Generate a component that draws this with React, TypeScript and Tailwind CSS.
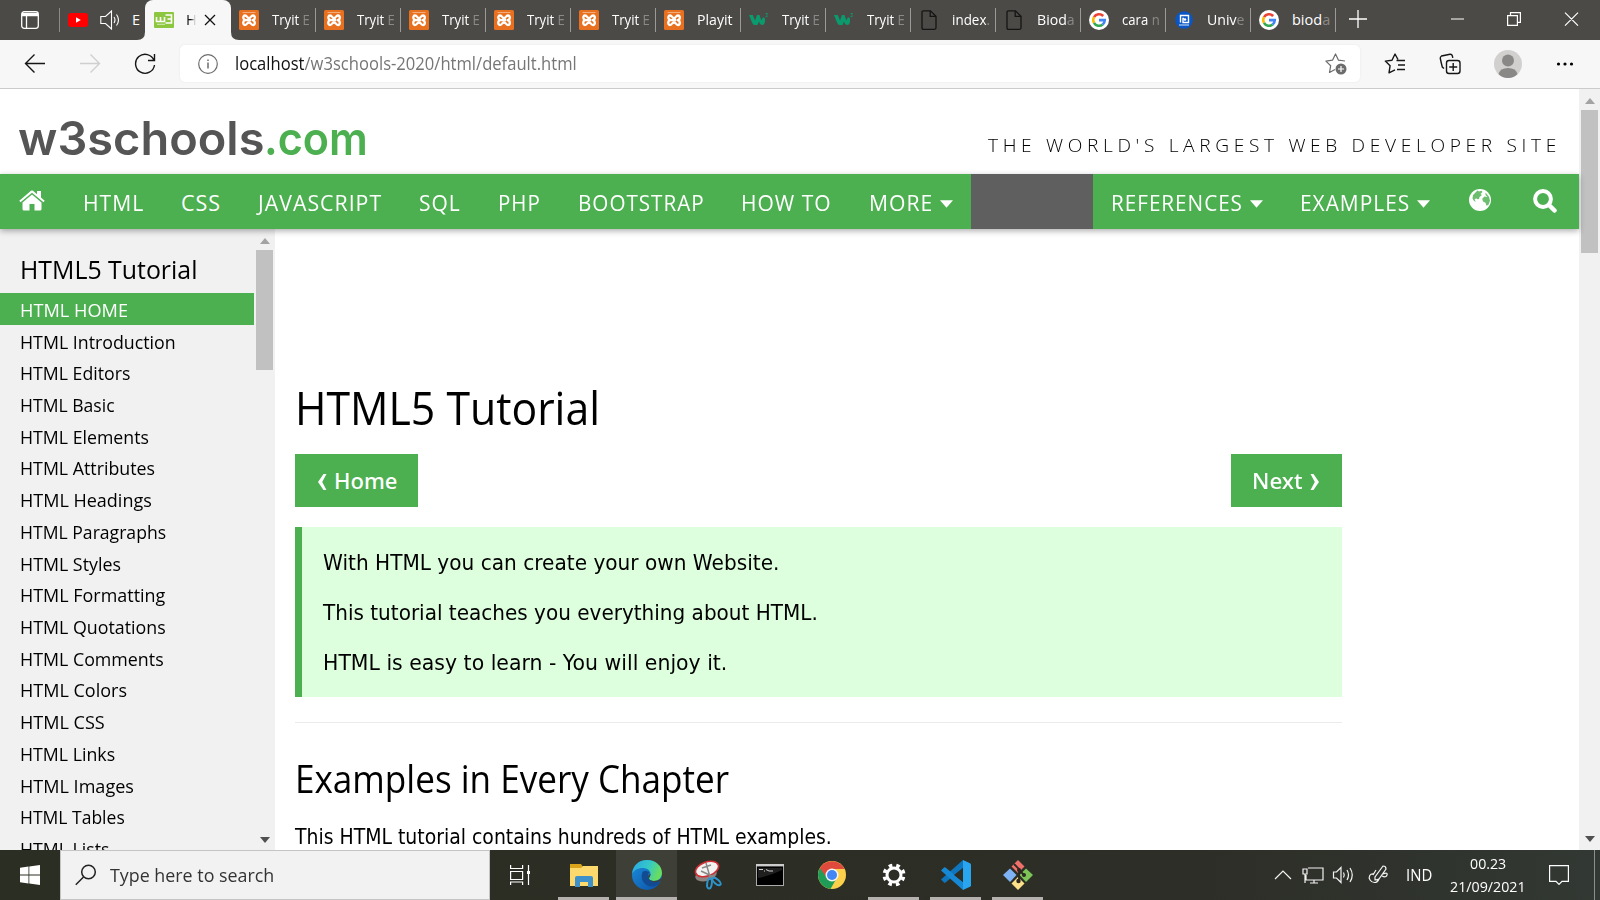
import { useLayoutEffect, useRef, type ReactNode } from "react";

/* Squeezes or stretches one line of text to the width of its box. */
function Fit({ className = "", children }: { className?: string; children: ReactNode }) {
  const box = useRef<HTMLSpanElement>(null);
  const line = useRef<HTMLSpanElement>(null);
  useLayoutEffect(() => {
    if (box.current && line.current) {
      const scale = box.current.clientWidth / line.current.offsetWidth;
      line.current.style.transform = `scaleX(${scale})`;
    }
  }, []);
  return (
    <span ref={box} className={`block shrink-0 ${className}`}>
      <span ref={line} className="inline-block origin-left whitespace-nowrap">{children}</span>
    </span>
  );
}

function Xampp() {
  return (
    <svg viewBox="0 0 20 20" className="size-5 shrink-0">
      <rect width="20" height="20" rx="1.500" fill="#e8701f" />
      <path d="M3.500 2.500h13" stroke="#f3ac7c" strokeWidth="1" />
      <path d="M8 10H12M8 10C3.500 10.500 3.500 5.500 6 5.500C8.500 5.500 7.500 8 10 8S11.500 5.500 14 5.500C16.500 5.500 16.500 10 13.500 10.200C16.500 10.500 16.500 15 14 15C11.500 15 12.500 12.500 10 12.500S8.500 15 6 15C3.500 15 3.500 10 7 10.200" fill="none" stroke="#fff" strokeWidth="2.300" strokeLinejoin="round" />
    </svg>
  );
}
function Spaces() {
  return (
    <svg viewBox="0 0 20 20" className="size-5 shrink-0">
      <path d="M0 5h3.800l2.200 5.500L8 5h2.500l1.800 5.500L14 7l2 1.500q.5 6-2.500 6.500-2.500 0-3.500-3.500L8.500 15H5.500Q4 15 3 12.500z" fill="#0b9a6d" />
      <path d="M16.500 3.500h2l-1 1.500q1.500.5.500 1.800l-1.500-.3" fill="none" stroke="#0b9a6d" strokeWidth=".8" />
    </svg>
  );
}
function Page() {
  return (
    <svg viewBox="0 0 20 20" className="size-5 shrink-0" fill="none" stroke="#151515" strokeWidth="1.300">
      <path d="M4.500.8h7L17 6.300v11.500q0 1.500-1.500 1.500h-11Q3 19.300 3 17.800V2.300Q3 .8 4.500.8zM11.200.8v5.500H17" />
    </svg>
  );
}
function Google() {
  return (
    <svg viewBox="0 0 20 20" className="size-5 shrink-0" fill="none" strokeWidth="2.600">
      <circle cx="10" cy="10" r="10" fill="#fff" />
      <path d="M14.200 6A5.800 5.800 0 0 0 5 7.200" stroke="#ea4335" />
      <path d="M5 7.200a5.800 5.800 0 0 0 0 5.600" stroke="#fbbc05" />
      <path d="M5 12.800a5.800 5.800 0 0 0 8.700 1.700" stroke="#34a853" />
      <path d="M13.700 14.500a5.800 5.800 0 0 0 2.100-4.400H10" stroke="#4285f4" />
    </svg>
  );
}
function University() {
  return (
    <svg viewBox="0 0 20 20" className="size-5 shrink-0">
      <circle cx="10" cy="10" r="8.800" fill="#0c56c4" />
      <path d="M6.500 12.500v-7h8v7h-5.500v-4h1" fill="none" stroke="#fff" strokeWidth="1.400" />
      <path d="M5 15h10" stroke="#b9d0f2" strokeWidth="1.200" />
      <circle cx="11" cy="9.500" r="1.300" fill="#fff" />
    </svg>
  );
}

const tabs: [ReactNode, string, string][] = [
  [<Xampp />, "Tryit", "E"],
  [<Xampp />, "Tryit", "E"],
  [<Xampp />, "Tryit", "E"],
  [<Xampp />, "Tryit", "E"],
  [<Xampp />, "Tryit", "E"],
  [<Xampp />, "Playit", ""],
  [<Spaces />, "Tryit", "E"],
  [<Spaces />, "Tryit", "E"],
  [<Page />, "index", "."],
  [<Page />, "Biod", "a"],
  [<Google />, "cara", "n"],
  [<University />, "Univ", "e"],
  [<Google />, "biod", "a"],
];

function TabBar() {
  return (
    <div className="flex h-10 bg-[#4b4a47] text-[14.500px] text-white">
      <div className="flex w-[59px] items-center pl-[21px]">
        <svg viewBox="0 0 18 18" className="size-[18px]" fill="none" stroke="#fff" strokeWidth="1.300">
          <rect x=".7" y=".7" width="16.600" height="16.600" rx="2.500" />
          <path d="M1 3.500h16" strokeWidth="3.500" />
          <path d="M5.500 5v12" />
        </svg>
      </div>
      <div className="my-2 w-px bg-[#8b8a88]" />
      <div className="flex w-[85px] items-center pl-2">
        <svg viewBox="0 0 20 20" className="size-5 shrink-0">
          <rect y="3" width="20" height="14" rx="3" fill="#f00" />
          <path d="M8 7.300v5.400l4.800-2.700z" fill="#fff" />
        </svg>
        <svg viewBox="0 0 20 20" className="ml-3 size-5 shrink-0" fill="none" stroke="#fff" strokeWidth="1.100">
          <path d="M.8 6.500h4.700L11.500 1v18l-6-5.500H.8zM14 7q2 3 0 6M16.500 4.500q4 5.500 0 11" />
        </svg>
        <span className="ml-[12px]">E</span>
      </div>
      <div className="relative flex w-[86px] items-center rounded-t-lg bg-[#f7f7f7] pl-[9px] text-[#111]">
        <svg viewBox="0 0 102 8" className="absolute bottom-0 -left-2 h-2 w-[102px] fill-[#f7f7f7]"><path d="M8 0v8H0q8 0 8-8zM94 0v8h8q-8 0-8-8z" /></svg>
        <svg viewBox="0 0 20 16" className="h-4 w-5 shrink-0">
          <rect width="20" height="16" rx="1" fill="#8dc63f" />
          <path d="M2.500 5v4.500h8V5M6.500 5v4.500M11.500 3h6v4h-4 4v4h-6" fill="none" stroke="#fff" strokeWidth="1.600" />
          <path d="M3 12.300h8" stroke="#d8ecc0" strokeWidth="1" />
        </svg>
        <span className="ml-[12px] w-[11px] bg-linear-to-r from-[#111] from-40% to-[#ccc] to-75% bg-clip-text text-transparent">H</span>
        <svg viewBox="0 0 12 12" className="ml-[7px] size-3" stroke="#111" strokeWidth="1.300"><path d="M1 1l10 10M11 1L1 11" /></svg>
      </div>
      {tabs.map(([icon, name, rest], i) => (
        <div key={i} className="flex w-[85px] items-center pl-2">
          {icon}
          <Fit className={`ml-[13px] ${rest === "" ? "w-[36px]" : "w-[38px]"}`}>
            {name}
            {rest && <span className="text-[#8a8987]">{rest === "E" || rest === "n" ? " " + rest : rest}</span>}
          </Fit>
          <div className="mr-0 ml-auto h-6 w-px bg-[#9b9a98]" />
        </div>
      ))}
      <svg viewBox="0 0 18 18" className="mt-[10px] ml-[13px] size-[18px]" stroke="#fff" strokeWidth="1.300"><path d="M9 0v18M0 9h18" /></svg>
      <svg viewBox="0 0 128 14" className="mt-3 ml-[84px] h-[14px] w-[128px]" fill="none" stroke="#fff" strokeWidth="1.200">
        <path d="M0 7h13M56.600 3.600h9.800v9.800h-9.800zM59.500 3.500V.6h9.900v9.800h-3M114 .6l13 13M127 .6l-13 13" />
      </svg>
    </div>
  );
}

function Toolbar() {
  return (
    <div className="flex h-[49px] items-center border-b border-[#cbcbcb] bg-[#f7f7f7]">
      <svg viewBox="0 0 132 22" className="ml-6 h-[22px] w-[132px]" fill="none" stroke="#161616" strokeWidth="1.400">
        <path d="M21 10.500H1.500M10.500 1.500l-9 9 9 9" />
        <path d="M56 10.500h19.500M66.500 1.500l9 9-9 9" stroke="#cfcfcf" />
        <path d="M130 7.500A9.500 9.500 0 1 0 130.500 12M130.500 1v6.500h-6.500" />
      </svg>
      <div className="-mt-px ml-6 flex h-[37px] w-[1180px] items-center rounded-[5px] bg-white pl-[18px] shadow-[0_0_2px_#e5e5e5]">
        <svg viewBox="0 0 20 20" className="size-5" fill="none" stroke="#6c6c6c" strokeWidth="1.200">
          <circle cx="10" cy="10" r="9.300" /><path d="M10 8.500v6M10 5.500v1.600" strokeWidth="1.500" />
        </svg>
        <Fit className="-mt-px ml-[17px] w-[342px] text-[18px] leading-[26px] text-[#767676]"><span className="text-[#111]">localhost</span>/w3schools-2020/html/default.html</Fit>
        <svg viewBox="0 0 22 22" className="mr-[13px] ml-auto size-[22px]" fill="none" stroke="#6c6c6c" strokeWidth="1.200">
          <path d="M20 8l-6.500-.8L10.500 1 7.500 7.200.9 8.100l4.800 4.600L4.500 19.500l5.500-3" strokeLinejoin="round" />
          <circle cx="16" cy="16" r="5.500" fill="#6c6c6c" stroke="none" /><path d="M16 13v6M13 16h6" stroke="#fff" />
        </svg>
      </div>
      <svg viewBox="0 0 22 22" className="ml-[24px] size-[22px]" fill="none" stroke="#161616" strokeWidth="1.400">
        <path d="M14 6.500L11 1 8 7.200 1.300 8.100l4.800 4.600L5 19.800l6-3M12.500 7.500H21M14 12h7M13 16.500h8" strokeLinejoin="round" />
      </svg>
      <svg viewBox="0 0 22 22" className="ml-[33px] size-[22px]" fill="none" stroke="#161616" strokeWidth="1.400">
        <rect x="7.500" y="7.500" width="13.500" height="13" rx="2.500" /><path d="M14.200 10v8M10.200 14h8M5 15.500L3.300 14Q2 9 1.300 5.500 1 4 2.500 3L11 1.200q1.800-.2 2.300 1.600l.5 2" />
      </svg>
      <svg viewBox="0 0 28 28" className="ml-[33px] size-7">
        <circle cx="14" cy="14" r="14" fill="#d2d0ce" /><circle cx="14" cy="10.500" r="6" fill="#8a8886" />
        <path d="M4.500 24Q6 18 14 18t9.500 6Q20 28 14 28T4.500 24z" fill="#8a8886" />
      </svg>
      <svg viewBox="0 0 18 4" className="ml-[34px] h-1 w-[18px]"><circle cx="2.500" cy="2" r="1.600" /><circle cx="9" cy="2" r="1.600" /><circle cx="15.500" cy="2" r="1.600" /></svg>
    </div>
  );
}

function Caret() {
  return <svg viewBox="0 0 14 8" className="mt-[1px] ml-[7px] h-2 w-[13px] fill-white"><path d="M0 0h14L7 8z" /></svg>;
}

function Nav() {
  return (
    <nav className="relative z-10 flex h-[55px] items-center bg-[#4caf50] pt-[3px] text-[21.500px] leading-[30px] font-normal tracking-[1px] text-white shadow-[0_2px_6px_rgba(0,0,0,0.32)]">
      <svg viewBox="0 0 26 21" className="-mt-[5px] ml-[19px] h-[21px] w-[26px] fill-white">
        <path d="M13 4.500L22.500 12.500V19q0 1.500-1.500 1.500h-5.500V14h-5v6.500H5q-1.500 0-1.500-1.500v-6.500z" />
        <path d="M12 .8q1-.8 2 0l4 3.400V1h4v6.500l3.700 3.200-1.200 1.500L13 2.800 1.500 12.200.3 10.700z" />
      </svg>
      <Fit className="ml-[38px] w-[61px]">HTML</Fit>
      <Fit className="ml-[37px] w-[40px]">CSS</Fit>
      <Fit className="ml-[37px] w-[124px]">JAVASCRIPT</Fit>
      <Fit className="ml-[37px] w-[42px]">SQL</Fit>
      <Fit className="ml-[37px] w-[43px]">PHP</Fit>
      <Fit className="ml-[37px] w-[127px]">BOOTSTRAP</Fit>
      <Fit className="ml-[36px] w-[91px]">HOW TO</Fit>
      <Fit className="ml-[37px] w-[64px]">MORE</Fit>
      <Caret />
      <div className="-mt-[3px] ml-[18px] h-[55px] w-[122px] bg-[#5f5f5f]" />
      <Fit className="ml-[18px] w-[132px]">REFERENCES</Fit>
      <Caret />
      <Fit className="ml-[37px] w-[110px]">EXAMPLES</Fit>
      <Caret />
      <svg viewBox="0 0 22 22" className="-mt-[7px] ml-[39px] size-[22px]">
        <circle cx="11" cy="11" r="11" fill="#fff" />
        <path d="M8.500 1.500l1.500 1 2.500-.8 1 1.300-2 2 1.500 1-2.500 2-.5 2-1.500.2-1.500-1-1.500 1.500 1.500 2-2-.7L3.500 9.500 4 6zM16.500 3.500l3.500 4.300 1 4-1.500 4-2 1-1-3-2.500-1.300-.8-2.700 2.300-2.200 3 .3-2-1.800z" fill="#4caf50" fillOpacity=".82" />
      </svg>
      <svg viewBox="0 0 24 24" className="-mt-[4px] ml-[42px] size-6" fill="none" stroke="#fff"><circle cx="10" cy="10" r="7.900" strokeWidth="4" /><path d="M16 16l5.500 5.500" strokeWidth="4.500" strokeLinecap="round" /></svg>
    </nav>
  );
}

const links: [string, string][] = [
  ["HTML HOME", "w-[108px]"],
  ["HTML Introduction", "w-[156px]"],
  ["HTML Editors", "w-[110px]"],
  ["HTML Basic", "w-[95px]"],
  ["HTML Elements", "w-[129px]"],
  ["HTML Attributes", "w-[135px]"],
  ["HTML Headings", "w-[132px]"],
  ["HTML Paragraphs", "w-[146px]"],
  ["HTML Styles", "w-[101px]"],
  ["HTML Formatting", "w-[145px]"],
  ["HTML Quotations", "w-[146px]"],
  ["HTML Comments", "w-[144px]"],
  ["HTML Colors", "w-[107px]"],
  ["HTML CSS", "w-[85px]"],
  ["HTML Links", "w-[95px]"],
  ["HTML Images", "w-[114px]"],
  ["HTML Tables", "w-[105px]"],
  ["HTML Lists", "w-[89px]"],
];

function Arrow({ down = false, className = "" }: { down?: boolean; className?: string }) {
  return <svg viewBox="0 0 10 6" className={`h-[6px] w-[10px] ${className}`}><path d={down ? "M0 0h10L5 6z" : "M0 6h10L5 0z"} fill={down ? "#505050" : "#a3a3a3"} /></svg>;
}

function Sidebar() {
  return (
    <aside className="flex h-[621px] w-[275px] shrink-0 bg-[#f1f1f1]">
      <div className="w-[254px] overflow-hidden text-[18.700px]">
        <Fit className="mt-[21px] ml-5 h-[43px] w-[177px] text-[26px] leading-[38px]">HTML5 Tutorial</Fit>
        {links.map(([name, width], i) => (
          <div key={name} className={`flex h-[31.720px] items-center pt-[2px] pl-5 ${i === 0 ? "bg-[#4caf50] text-white" : ""}`}>
            <Fit className={`leading-[28px] ${width}`}>{name}</Fit>
          </div>
        ))}
      </div>
      <div className="flex w-[21px] flex-col items-center pt-[9px] pb-[7px]">
        <Arrow />
        <div className="mt-[6px] h-[120px] w-[17px] bg-[#c1c1c1]" />
        <Arrow down className="mt-auto" />
      </div>
    </aside>
  );
}

function Article() {
  return (
    <main className="flex h-[621px] w-[1067px] flex-col overflow-hidden pl-[20px]">
      <Fit className="mt-[149px] h-[60px] w-[305px] text-[45px] leading-[60px]">HTML5 Tutorial</Fit>
      <div className="mt-[16px] flex h-[53px] shrink-0 justify-between font-['Noto_Sans',sans-serif] text-[22px] leading-[30px] font-medium text-white">
        <div className="flex w-[123px] items-center bg-[#4caf50] pb-[2px] pl-[22px]">
          <svg viewBox="0 0 10 16" className="mt-1 h-4 w-[10px] fill-white"><path d="M6.500 0h3L5.200 8l4.300 8h-3L1 8z" /></svg>
          <Fit className="ml-[7px] w-[63px]">Home</Fit>
        </div>
        <div className="flex w-[111px] items-center bg-[#4caf50] pb-[2px] pl-[21px]">
          <Fit className="w-[51px]">Next</Fit>
          <svg viewBox="0 0 10 16" className="mt-1 ml-[7px] h-4 w-[10px] fill-white"><path d="M3.500 0h-3l4.300 8L.5 16h3L9 8z" /></svg>
        </div>
      </div>
      <div className="mt-5 flex h-[170px] shrink-0 flex-col gap-[20px] border-l-[7px] border-[#4caf50] bg-[#ddffdd] pt-[21px] pl-[21px] font-['DejaVu_Sans',sans-serif] text-[20.500px] leading-[30px]">
        <Fit className="w-[456px]">With HTML you can create your own Website.</Fit>
        <Fit className="w-[495px]">This tutorial teaches you everything about HTML.</Fit>
        <Fit className="w-[404px]">HTML is easy to learn - You will enjoy it.</Fit>
      </div>
      <div className="mt-[25px] h-px shrink-0 bg-[#ebebeb]" />
      <Fit className="mt-[30px] h-[50px] w-[434px] text-[38px] leading-[50px]">Examples in Every Chapter</Fit>
      <Fit className="mt-[19px] w-[537px] font-['DejaVu_Sans',sans-serif] text-[20.500px] leading-[30px]">This HTML tutorial contains hundreds of HTML examples.</Fit>
    </main>
  );
}

function Slot({ open = false, active = false, className = "", children }: { open?: boolean; active?: boolean; className?: string; children: ReactNode }) {
  return (
    <div className={`flex h-[50px] w-[61px] flex-col items-center ${active ? "bg-[#3e4037]" : ""} ${className}`}>
      <div className="flex h-[47px] items-center pt-[3px]">{children}</div>
      {open && <div className={`h-[3px] bg-[#b5b1ae] ${active ? "w-[61px]" : "w-[51px]"}`} />}
    </div>
  );
}

function Taskbar() {
  return (
    <footer className="flex h-[50px] bg-linear-to-r from-[#2b2e22] via-[#2d2e27] via-75% to-[#323833] text-white">
      <div className="flex w-[60px] items-center justify-center">
        <svg viewBox="0 0 20 20" className="size-5 fill-white"><path d="M0 2.800l8.500-1.200v8H0zM9.300 1.500L20 0v9.600H9.300zM0 10.400h8.500v8L0 17.200zM9.300 10.400H20V20L9.300 18.500z" /></svg>
      </div>
      <div className="flex w-[430px] items-center border border-[#c4c4c4] bg-[#f2f2f2] pl-[14px]">
        <svg viewBox="0 0 22 22" className="size-[22px]" fill="none" stroke="#222" strokeWidth="1.500"><circle cx="13.500" cy="8" r="6.800" /><path d="M8.500 13L.8 20.800" /></svg>
        <Fit className="ml-[13px] w-[164px] text-[18.500px] leading-[28px] text-[#333]">Type here to search</Fit>
      </div>
      <div className="flex w-[61px] items-center justify-center">
        <svg viewBox="0 0 21 20" className="h-5 w-[21px]" fill="none" stroke="#fff" strokeWidth="1.200"><path d="M.6 0v3.500h12V0M.6 6.500h12v8H.6zM.6 20v-3h12v3M18.500 0v20" /><path d="M17 6h3v3h-3z" fill="#fff" stroke="none" /></svg>
      </div>
      <Slot open className="ml-[2px]">
        <svg viewBox="0 0 28 24" className="h-6 w-7">
          <path d="M0 1h11l2 3v4H0z" fill="#d9a31b" /><path d="M0 5h11l2-2h15v20H0z" fill="#fdd86c" />
          <path d="M5 24V15q0-2 2-2h14q2 0 2 2v9h-5v-5h-8v5z" fill="#3e90ca" />
        </svg>
      </Slot>
      <Slot open active className="ml-[2px]">
        <svg viewBox="0 0 30 30" className="size-[30px]">
          <defs>
            <linearGradient id="ea" x1="0" x2="1" y1="0" y2=".3"><stop offset="0" stopColor="#2aa5e8" /><stop offset=".6" stopColor="#35c9c6" /><stop offset="1" stopColor="#68dd60" /></linearGradient>
            <linearGradient id="eb" x1="0" x2="1" y1="0" y2="1"><stop offset="0" stopColor="#1b8fdc" /><stop offset="1" stopColor="#0c4fa5" /></linearGradient>
          </defs>
          <circle cx="15" cy="15" r="15" fill="url(#eb)" />
          <path d="M0 14C1 5 7 0 15 0c9 0 15 6 15 13 0 5-4 8-8 8-3 0-5-1-5-2.500s1.500-2 1.500-4.500c0-4-4-6-8-6C6 8 2 10 0 14z" fill="url(#ea)" />
          <path d="M10.500 12c-3 7 2 14.500 9.500 14.500 4 0 7-2.500 8.500-5.500-6 2.500-12 0-12.500-4.500-.2-2 .5-3.500 1.500-4-2.500-2-5.500-2-7-.5z" fill="#124b92" />
          <path d="M31 16c-1.500 3.500-5 5-9 5-3 0-5-1-5-2.500s1.500-2 1.500-4.500c0 0-2 .5-2.300 2.500-.3 4 5 7.500 12.300 4.500l2.500-1z" fill="#3e4037" />
        </svg>
      </Slot>
      <Slot>
        <svg viewBox="0 0 28 30" className="h-[30px] w-7">
          <ellipse cx="12" cy="15" rx="11" ry="6" fill="#8d8481" transform="rotate(-15 12 15)" />
          <ellipse cx="13" cy="9" rx="12" ry="7" fill="#f4f1f1" stroke="#cf2f35" strokeWidth="1.600" transform="rotate(-20 13 9)" />
          <path d="M12 3l4 14M7 11l15 7M8 8l9-3" stroke="#888" strokeWidth="1.500" />
          <g fill="none" stroke="#2d93cb" strokeWidth="2"><ellipse cx="15.500" cy="23.500" rx="2.300" ry="5" transform="rotate(8 15.500 23.500)" /><ellipse cx="22.500" cy="21.500" rx="2.300" ry="5" transform="rotate(-50 22.500 21.500)" /></g>
        </svg>
      </Slot>
      <Slot className="ml-[1px]">
        <svg viewBox="0 0 28 22" className="h-[22px] w-7"><rect x=".5" y=".5" width="27" height="21" fill="#000" stroke="#aaa" /><path d="M0 1.200h28" stroke="#ccc" strokeWidth="2.400" /><path d="M3 5.500h4M8 7h1M10 5.500l3 1.500h4" stroke="#ccc" strokeWidth="1" /><path d="M2 14Q14 12 26 6V4H2z" fill="#fff" fillOpacity=".12" /></svg>
      </Slot>
      <Slot className="ml-[1px]">
        <svg viewBox="0 0 28 28" className="size-7">
          <circle cx="14" cy="14" r="14" fill="#fdd04b" />
          <path d="M14 14L1.900 7A14 14 0 0 0 12.500 27.900L19 16.500z" fill="#1f9d57" />
          <path d="M1.900 7A14 14 0 0 1 26.500 8H14l-6 7.500z" fill="#df4a3d" />
          <circle cx="14" cy="14" r="6.500" fill="#f4f4f4" /><circle cx="14" cy="14" r="5" fill="#4285f4" />
        </svg>
      </Slot>
      <Slot open className="ml-[1px]">
        <svg viewBox="0 0 24 24" className="size-6" fill="none" stroke="#fff"><circle cx="12" cy="12" r="7" strokeWidth="3" /><circle cx="12" cy="12" r="9.700" strokeWidth="3.600" strokeDasharray="3.600 4.018" strokeDashoffset="5.600" /></svg>
      </Slot>
      <Slot open className="ml-[1px]">
        <svg viewBox="0 0 30 30" className="size-[30px]">
          <path d="M22 0L0 19.500l3 3q.8.500 1.500 0L22 8z" fill="#0f76bd" />
          <path d="M22 30L0 10.500l3-3q.8-.5 1.500 0L22 22z" fill="#1788d4" /><path d="M22 8v14L13 15z" fill="#2d2e25" />
          <path d="M22 0l7 3.200q1 .5 1 1.500v20.600q0 1-1 1.500L22 30z" fill="#29a4ee" />
        </svg>
      </Slot>
      <Slot open className="ml-[1px]">
        <svg viewBox="0 0 30 30" className="size-[30px]">
          <path d="M15 0l6.500 6.500L15 13 8.500 6.500z" fill="#f0706a" /><path d="M23 8.500l7 6.500-7 7-6.500-7z" fill="#7cc455" /><path d="M7 8.500l6.500 6.500L7 22l-7-7z" fill="#7fb2f4" /><path d="M15 17l6.500 6.500L15 30l-6.500-6.500z" fill="#fde08a" />
          <path d="M11 4l5 5v12M16 10l5 5" fill="none" stroke="#2b2721" strokeWidth="1.800" /><circle cx="16" cy="10" r="2" fill="#2b2721" /><circle cx="21" cy="15" r="2" fill="#2b2721" /><circle cx="15.500" cy="21" r="2.200" fill="#2b2721" />
        </svg>
      </Slot>
      <svg viewBox="0 0 114 22" className="mt-[14px] ml-auto h-[22px] w-[114px] shrink-0" fill="none" stroke="#f4f4f4" strokeWidth="1.200">
        <path d="M1 15l8-8 8 8" />
        <path d="M34 4h15v12H32v-5M29 5h4v5h-4zM31 10v9M40 16v3M36 19h8" />
        <path d="M59.500 8h3l4.500-4.500v15L62.500 14h-3zM69.500 8.500q1.500 2.500 0 5M73 6q3 5 0 10M76 4q4.500 7 0 14" />
        <path d="M100 10c-4-1-6 3-4 6s7 4 9-1l7-10q0-3-3-3l-8 11v3q3 0 4-1M102 6l-3 5M109 10q5-2 4 1t-5 1" />
      </svg>
      <Fit className="mt-[14px] ml-[18px] w-[26px] text-[15.500px] leading-[22px]">IND</Fit>
      <div className="mt-[2px] ml-[18px] flex w-[76px] flex-col items-center text-[15px] leading-[23px]">
        <Fit className="w-[36px]">00.23</Fit>
        <Fit className="w-[76px]">21/09/2021</Fit>
      </div>
      <svg viewBox="0 0 20 20" className="mt-[15px] ml-[23px] size-5" fill="none" stroke="#fff" strokeWidth="1.200"><path d="M.6.6h18.800v15.800H13L10 19.400 7 16.400H.6z" /></svg>
      <div className="mr-[5px] ml-[25px] w-px bg-[#8c8f8b]" />
    </footer>
  );
}

export default function App() {
  return (
    <div className="flex h-[900px] w-[1600px] flex-col overflow-hidden bg-white font-['Open_Sans','Noto_Sans',sans-serif] text-black">
      <TabBar />
      <Toolbar />
      <div className="flex h-[761px]">
        <div className="w-[1579px]">
          <header className="flex h-[85px] justify-between pr-[18px] pl-[18px]">
            <div className="mt-[19px] flex font-['Inter',sans-serif] text-[46px] leading-[60px] font-semibold text-[#555]">
              <Fit className="w-[246px]">w3schools</Fit>
              <Fit className="w-[104px] text-[#4caf50]">.com</Fit>
            </div>
            <Fit className="mt-[42px] w-[573px] text-[18.500px] leading-[28px] font-light tracking-[4.500px]">THE WORLD'S LARGEST WEB DEVELOPER SITE</Fit>
          </header>
          <Nav />
          <div className="flex">
            <Sidebar />
            <Article />
          </div>
        </div>
        <div className="flex w-[21px] flex-col items-center bg-[#f1f1f1] pt-[9px] pb-[8px]">
          <Arrow />
          <div className="mt-[6px] h-[143px] w-[17px] bg-[#c1c1c1]" />
          <Arrow down className="mt-auto" />
        </div>
      </div>
      <Taskbar />
    </div>
  );
}
